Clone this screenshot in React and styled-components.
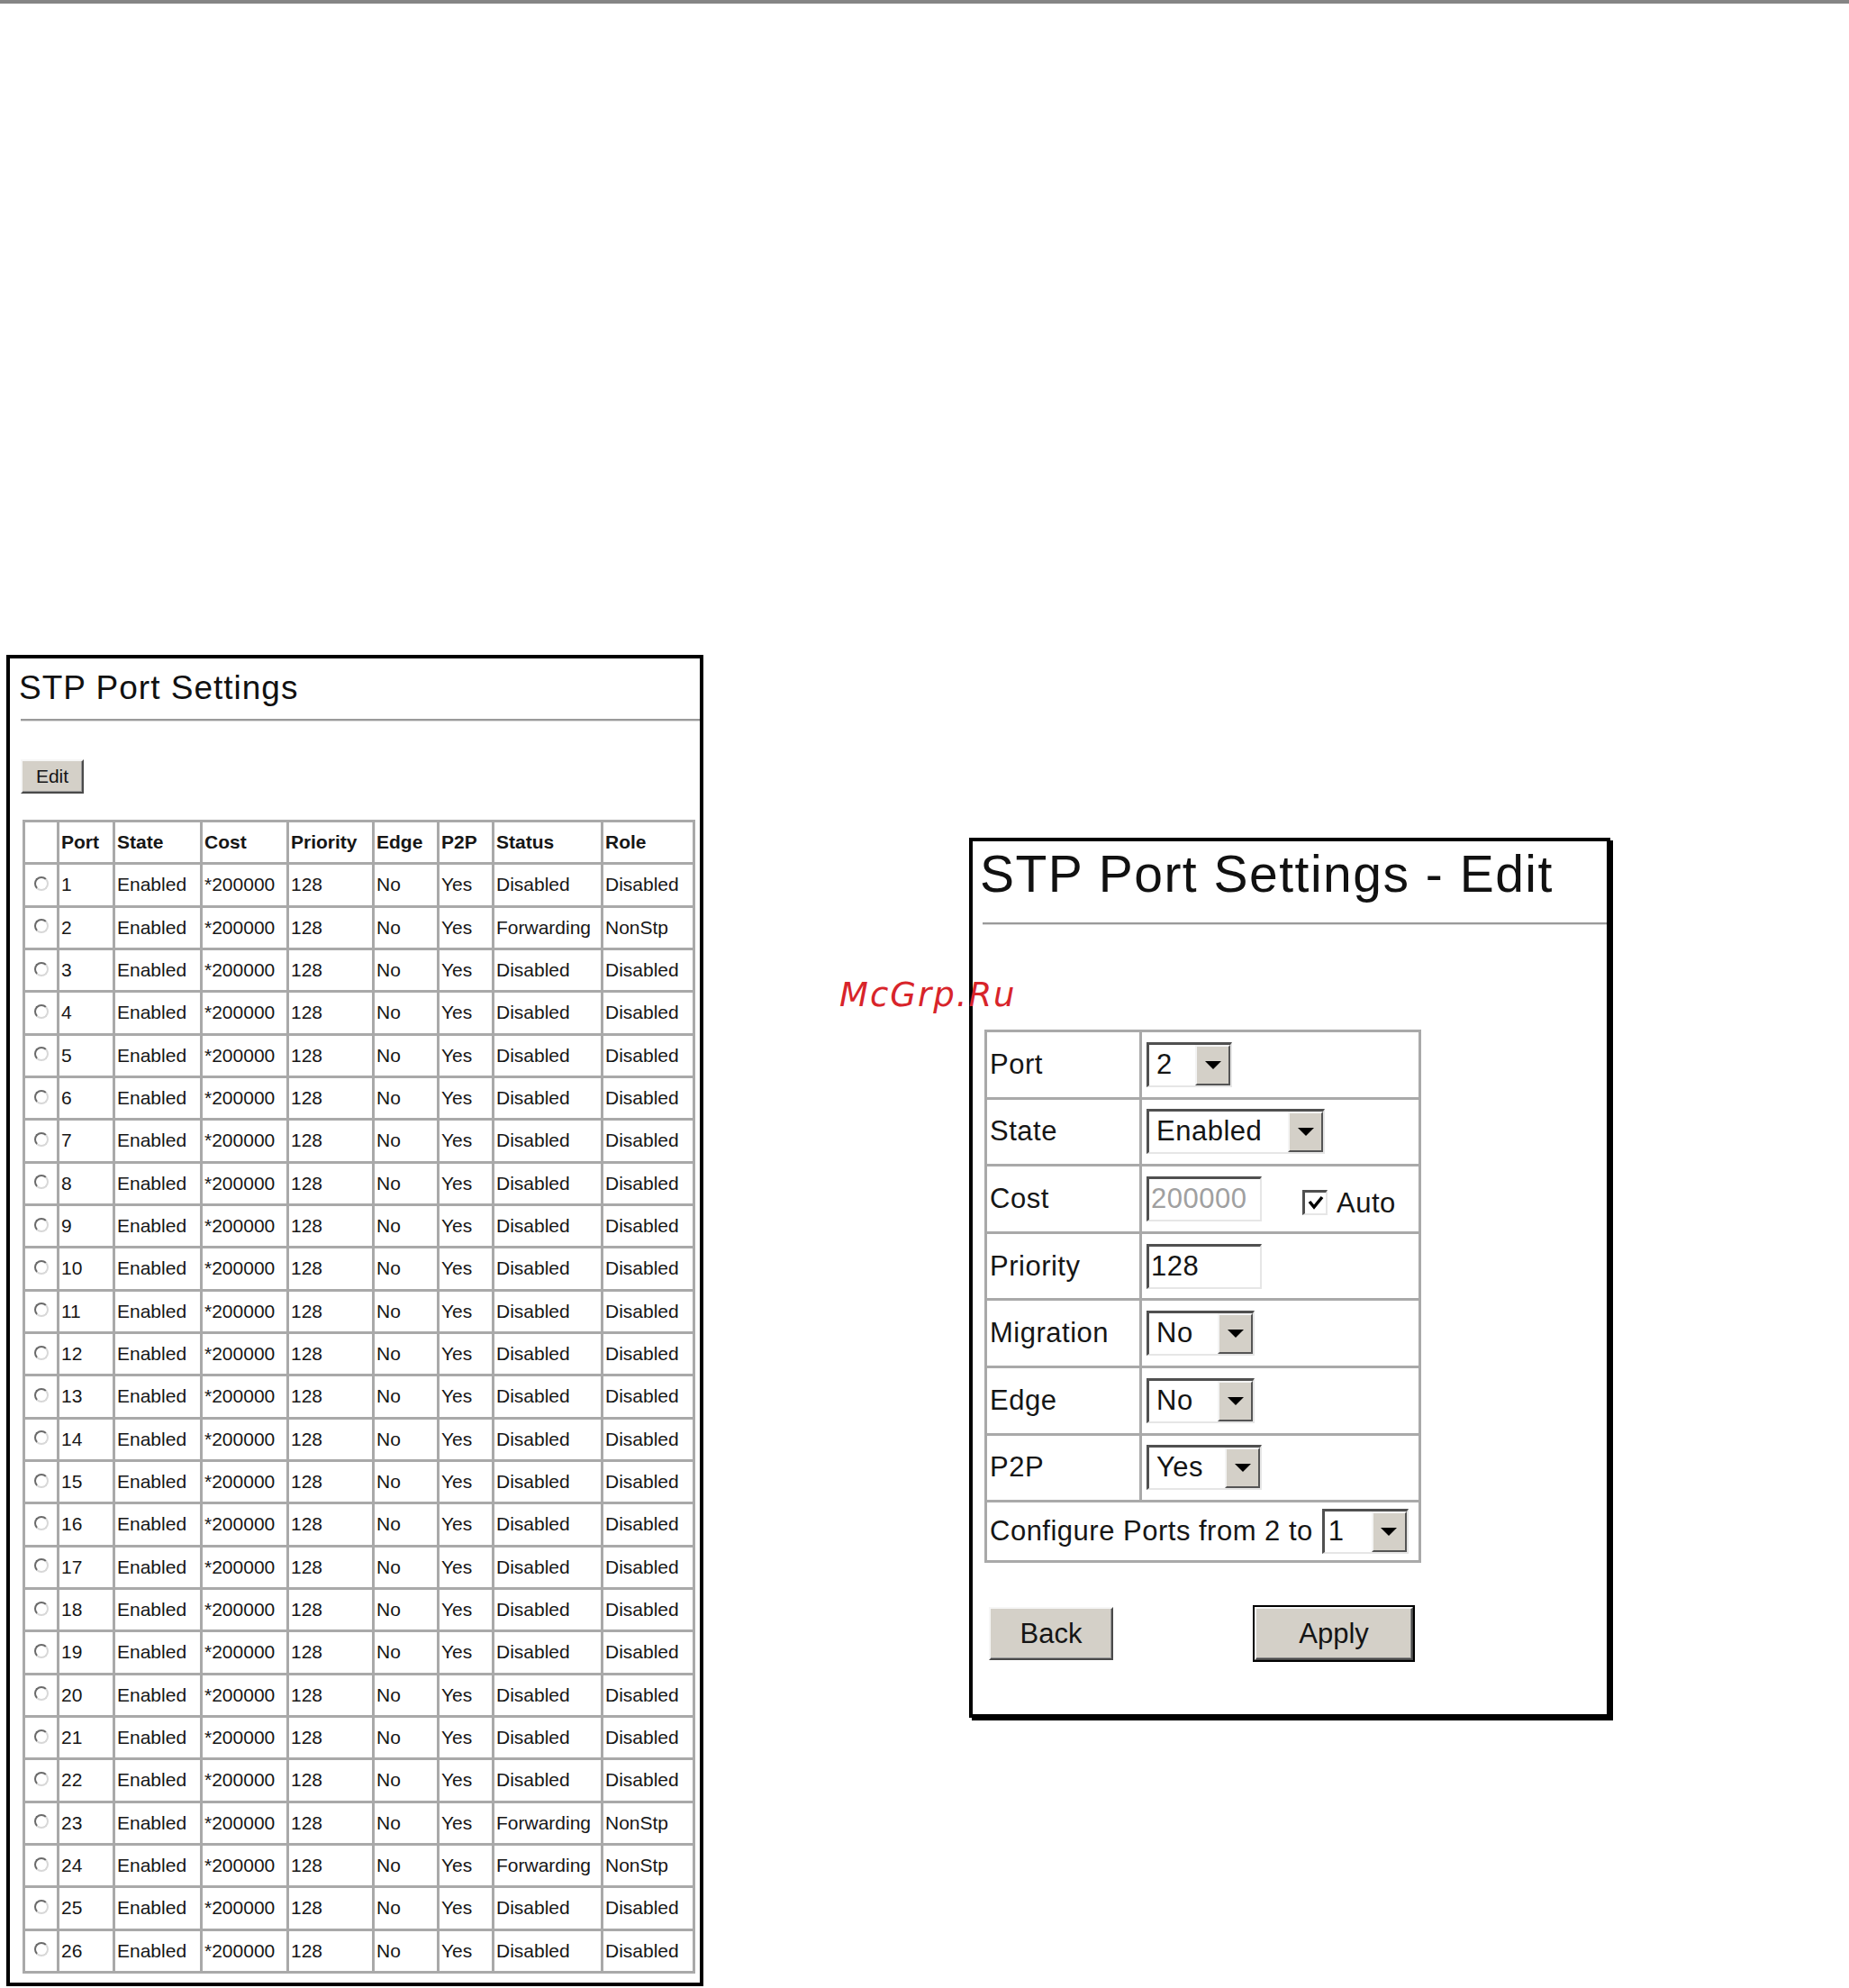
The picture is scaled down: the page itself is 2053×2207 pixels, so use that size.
import React from "react";
import styled, { createGlobalStyle } from "styled-components";

const Global = createGlobalStyle`
  html, body { margin: 0; padding: 0; background: #fff; overflow: hidden; }
  body { width: 2053px; height: 2207px; }
`;

const Page = styled.div`
  position: relative;
  width: 2053px;
  height: 2207px;
  font-family: "Liberation Sans", Arial, sans-serif;
  color: #161616;
`;

const TopRule = styled.div`
  height: 4px;
  background: #858585;
`;

const Columns = styled.div`
  display: flex;
  align-items: flex-start;
`;

const Panel = styled.section`
  box-sizing: border-box;
  border: 4px solid #000;
  background: #fff;
  width: ${(p) => p.$w}px;
  height: ${(p) => p.$h}px;
  margin-top: ${(p) => p.$top}px;
  margin-left: ${(p) => p.$left}px;
  box-shadow: ${(p) => (p.$shadow ? "3px 3px 0 #000" : "none")};
`;

const Title = styled.h1`
  margin: ${(p) => p.$mt}px 0 0 ${(p) => p.$ml}px;
  font-weight: 400;
  font-size: ${(p) => p.$size}px;
  line-height: ${(p) => p.$lh}px;
  letter-spacing: ${(p) => p.$ls}px;
  color: #111;
  white-space: nowrap;
`;

const Rule = styled.div`
  margin: ${(p) => p.$mt}px 0 0 ${(p) => p.$ml}px;
  height: 2px;
  background: #9a9a9a;
  border-bottom: 1px solid #dcdcdc;
`;

const RaisedButton = styled.button`
  box-sizing: border-box;
  display: inline-flex;
  align-items: center;
  justify-content: center;
  width: ${(p) => p.$w}px;
  height: ${(p) => p.$h}px;
  padding: 0;
  font-family: "Liberation Sans", Arial, sans-serif;
  font-size: ${(p) => p.$size}px;
  color: #151515;
  background: #d4d0c8;
  border-style: solid;
  border-width: 2px;
  border-color: #f6f6f6 #4a4a4a #4a4a4a #f6f6f6;
  outline: ${(p) => (p.$default ? "2px solid #000" : "none")};
  outline-offset: 0;
  box-shadow: ${(p) => (p.$default ? "inset -1px -1px 0 #888" : "inset -1px -1px 0 #9a9a9a")};
`;

const EditRow = styled.div`
  margin: 42px 0 0 12px;
`;

const ListTable = styled.table`
  border-collapse: collapse;
  table-layout: fixed;
  width: 745px;
  margin: 29px 0 0 14px;
  font-size: 21px;
  color: #161616;
`;

const ListRow = styled.tr`
  height: 47.33px;
`;

const ListCell = styled.td`
  border: 3px solid #a9a9a9;
  padding: 0 2px;
  vertical-align: middle;
  white-space: nowrap;
  overflow: hidden;
  text-align: left;
  font-weight: 400;
`;

const ListHead = styled(ListCell).attrs({ as: "th" })`
  font-weight: 700;
`;

const RadioCell = styled(ListCell)`
  padding: 0 0 0 10px;
`;

const Radio = styled.span`
  display: block;
  box-sizing: border-box;
  width: 16px;
  height: 16px;
  margin-top: -3px;
  border-radius: 50%;
  border: 2px solid;
  border-color: #6a6a6a #d8d8d8 #d8d8d8 #6a6a6a;
  background: #fff;
`;

const FormTable = styled.table`
  border-collapse: collapse;
  table-layout: fixed;
  width: 482px;
  margin: 116px 0 0 13px;
  font-size: 31px;
  letter-spacing: 0.5px;
  color: #161616;
`;

const FormRow = styled.tr`
  height: ${(p) => p.$h}px;
`;

const FormCell = styled.td`
  border: 3px solid #a9a9a9;
  padding: 0 0 0 ${(p) => p.$pl}px;
  vertical-align: middle;
  white-space: nowrap;
`;

const Inline = styled.div`
  display: flex;
  align-items: center;
`;

const Sunken = styled.div`
  box-sizing: border-box;
  display: inline-flex;
  align-items: stretch;
  width: ${(p) => p.$w}px;
  height: 50px;
  border-style: solid;
  border-width: 3px 2px 2px 3px;
  border-color: #505050 #e6e6e6 #e6e6e6 #505050;
  background: #fff;
  margin-left: ${(p) => p.$ml || 0}px;
`;

const FieldValue = styled.span`
  flex: 1;
  padding-left: ${(p) => p.$pl}px;
  line-height: 44px;
  font-size: 31px;
  color: ${(p) => (p.$muted ? "#a0a0a0" : "#141414")};
`;

const ArrowButton = styled.span`
  box-sizing: border-box;
  width: 39px;
  display: flex;
  align-items: center;
  justify-content: center;
  background: #d4d0c8;
  border-style: solid;
  border-width: 2px;
  border-color: #f4f4f4 #555 #555 #f4f4f4;
`;

const Triangle = styled.span`
  width: 0;
  height: 0;
  border-left: 9px solid transparent;
  border-right: 9px solid transparent;
  border-top: 9px solid #000;
`;

const CheckBox = styled.span`
  box-sizing: border-box;
  display: inline-flex;
  align-items: center;
  justify-content: center;
  width: 28px;
  height: 28px;
  margin: 8px 0 0 45px;
  border-style: solid;
  border-width: 3px 2px 2px 3px;
  border-color: #505050 #e6e6e6 #e6e6e6 #505050;
  background: #fff;
`;

const CheckLabel = styled.span`
  margin: 10px 0 0 10px;
  font-size: 31px;
`;

const ButtonRow = styled.div`
  display: flex;
  align-items: flex-start;
  margin: 49px 0 0 18px;
  gap: 157px;
`;

const Watermark = styled.div`
  position: absolute;
  left: 932px;
  top: 1086px;
  font-family: "DejaVu Sans", sans-serif;
  font-style: italic;
  font-size: 37px;
  line-height: 37px;
  letter-spacing: 2px;
  color: #d8242a;
`;

const Select = ({ w, value, pl = 8 }) => (
  <Sunken $w={w}>
    <FieldValue $pl={pl}>{value}</FieldValue>
    <ArrowButton>
      <Triangle />
    </ArrowButton>
  </Sunken>
);

const forwarding = new Set([2, 23, 24]);
const ports = Array.from({ length: 26 }, (_, i) => i + 1);
const cols = [38, 62, 97, 96, 95, 72, 61, 121, 102];
const heads = ["", "Port", "State", "Cost", "Priority", "Edge", "P2P", "Status", "Role"];

const rowH = 74.6;

export default function App() {
  return (
    <Page>
      <Global />
      <TopRule />
      <Columns>
        <Panel $w={774} $h={1478} $top={723} $left={7}>
          <Title $mt={13} $ml={10} $size={37} $lh={40} $ls={1}>
            STP Port Settings
          </Title>
          <Rule $mt={14} $ml={12} />
          <EditRow>
            <RaisedButton $w={70} $h={38} $size={21}>
              Edit
            </RaisedButton>
          </EditRow>
          <ListTable>
            <colgroup>
              {cols.map((w, i) => (
                <col key={i} style={{ width: w }} />
              ))}
            </colgroup>
            <thead>
              <ListRow>
                {heads.map((h, i) => (
                  <ListHead key={i}>{h}</ListHead>
                ))}
              </ListRow>
            </thead>
            <tbody>
              {ports.map((p) => {
                const fw = forwarding.has(p);
                return (
                  <ListRow key={p}>
                    <RadioCell>
                      <Radio />
                    </RadioCell>
                    <ListCell>{p}</ListCell>
                    <ListCell>Enabled</ListCell>
                    <ListCell>*200000</ListCell>
                    <ListCell>128</ListCell>
                    <ListCell>No</ListCell>
                    <ListCell>Yes</ListCell>
                    <ListCell>{fw ? "Forwarding" : "Disabled"}</ListCell>
                    <ListCell>{fw ? "NonStp" : "Disabled"}</ListCell>
                  </ListRow>
                );
              })}
            </tbody>
          </ListTable>
        </Panel>

        <Panel $w={712} $h={977} $top={926} $left={295} $shadow>
          <Title $mt={6} $ml={8} $size={57} $lh={60} $ls={1.5}>
            STP Port Settings - Edit
          </Title>
          <Rule $mt={24} $ml={11} />
          <FormTable>
            <colgroup>
              <col style={{ width: 172 }} />
              <col style={{ width: 310 }} />
            </colgroup>
            <tbody>
              <FormRow $h={rowH}>
                <FormCell $pl={3}>Port</FormCell>
                <FormCell $pl={5}>
                  <Select w={95} value="2" />
                </FormCell>
              </FormRow>
              <FormRow $h={rowH}>
                <FormCell $pl={3}>State</FormCell>
                <FormCell $pl={5}>
                  <Select w={198} value="Enabled" />
                </FormCell>
              </FormRow>
              <FormRow $h={rowH}>
                <FormCell $pl={3}>Cost</FormCell>
                <FormCell $pl={5}>
                  <Inline>
                    <Sunken $w={128}>
                      <FieldValue $pl={2} $muted>
                        200000
                      </FieldValue>
                    </Sunken>
                    <CheckBox>
                      <svg width="18" height="16" viewBox="0 0 18 16">
                        <polyline
                          points="2,7 7,13 16,2"
                          fill="none"
                          stroke="#000"
                          strokeWidth="3.5"
                        />
                      </svg>
                    </CheckBox>
                    <CheckLabel>Auto</CheckLabel>
                  </Inline>
                </FormCell>
              </FormRow>
              <FormRow $h={rowH}>
                <FormCell $pl={3}>Priority</FormCell>
                <FormCell $pl={5}>
                  <Sunken $w={128}>
                    <FieldValue $pl={2}>128</FieldValue>
                  </Sunken>
                </FormCell>
              </FormRow>
              <FormRow $h={rowH}>
                <FormCell $pl={3}>Migration</FormCell>
                <FormCell $pl={5}>
                  <Select w={120} value="No" />
                </FormCell>
              </FormRow>
              <FormRow $h={rowH}>
                <FormCell $pl={3}>Edge</FormCell>
                <FormCell $pl={5}>
                  <Select w={120} value="No" />
                </FormCell>
              </FormRow>
              <FormRow $h={rowH}>
                <FormCell $pl={3}>P2P</FormCell>
                <FormCell $pl={5}>
                  <Select w={128} value="Yes" />
                </FormCell>
              </FormRow>
              <FormRow $h={67}>
                <FormCell $pl={3} colSpan={2}>
                  <Inline>
                    Configure Ports from 2 to
                    <Sunken $w={96} $ml={10}>
                      <FieldValue $pl={4}>1</FieldValue>
                      <ArrowButton>
                        <Triangle />
                      </ArrowButton>
                    </Sunken>
                  </Inline>
                </FormCell>
              </FormRow>
            </tbody>
          </FormTable>
          <ButtonRow>
            <RaisedButton $w={138} $h={59} $size={31}>
              Back
            </RaisedButton>
            <RaisedButton $w={176} $h={59} $size={31} $default>
              Apply
            </RaisedButton>
          </ButtonRow>
        </Panel>
      </Columns>
      <Watermark>McGrp.Ru</Watermark>
    </Page>
  );
}
